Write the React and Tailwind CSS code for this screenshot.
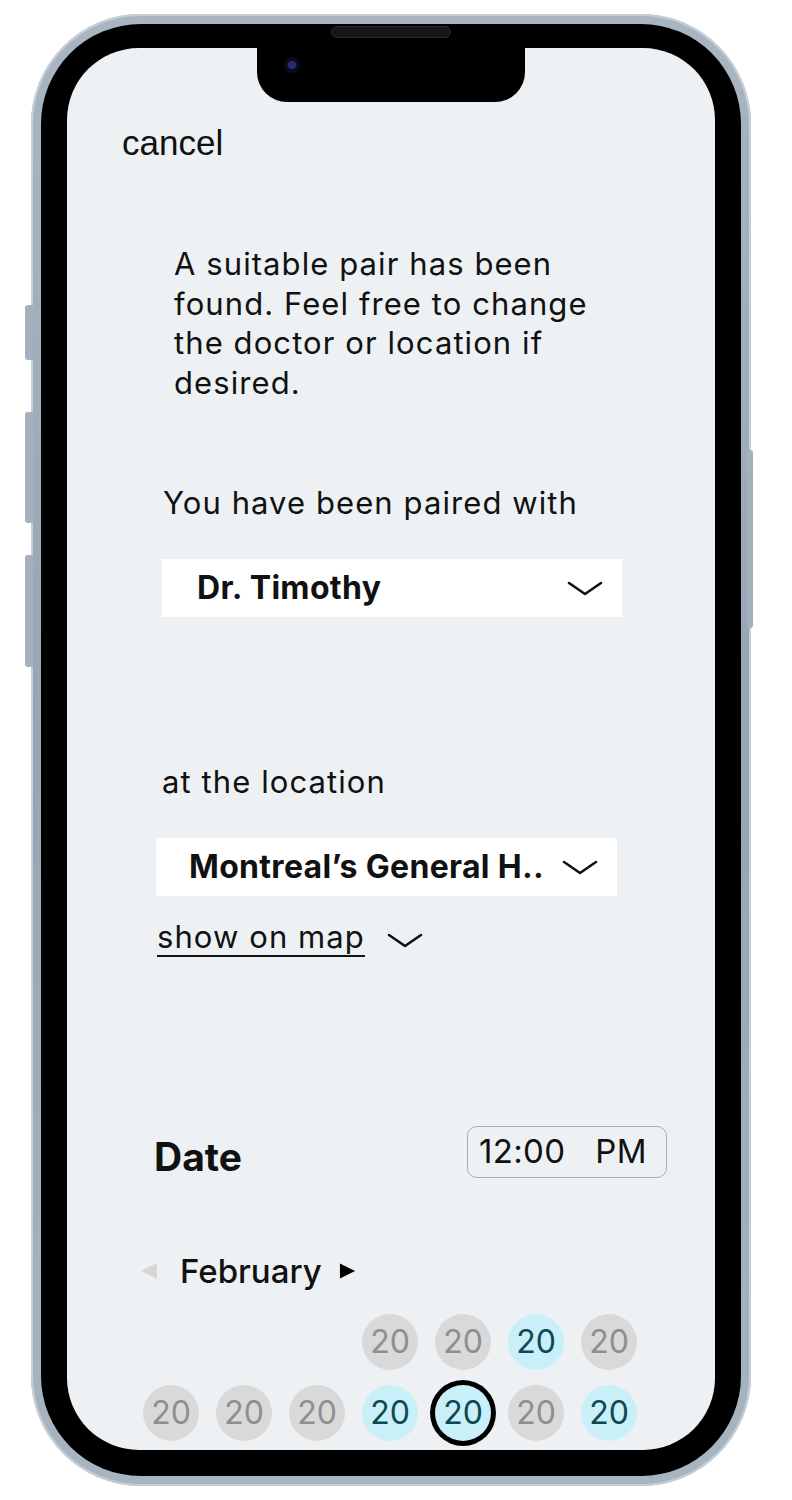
const font = { fontFamily: 'Inter, "Noto Sans", sans-serif' };

const days = [
  null, null, null,
  'off', 'off', 'open', 'off',
  'off', 'off', 'off', 'open', 'selected', 'off', 'open',
];

function Chevron({ className }) {
  return (
    <svg viewBox="0 0 36 15" className={className} fill="none" stroke="#111" strokeWidth="2.6" strokeLinecap="round" strokeLinejoin="round">
      <path d="M2 2 L18 13 L34 2" />
    </svg>
  );
}

function Select({ label, className }) {
  return (
    <div className={`flex h-[58px] w-[460px] items-center justify-between bg-white pr-[19px] ${className}`}>
      <span className="text-[32px] font-bold tracking-[0.01em] text-[#111]">{label}</span>
      <Chevron className="h-[15px] w-[36px]" />
    </div>
  );
}

function Day({ kind }) {
  if (!kind) return <div />;
  const base = 'flex h-[56px] w-[56px] items-center justify-center rounded-full text-[32px]';
  if (kind === 'off') return <div className={`${base} bg-[#d9d9d9] text-[#8e8e8e]`}>20</div>;
  if (kind === 'open') return <div className={`${base} bg-[#c9f0f8] text-[#0d4955]`}>20</div>;
  return <div className={`${base} bg-[#c9f0f8] text-[#0d4955] ring-[5px] ring-black`}>20</div>;
}

export default function App() {
  return (
    <div className="min-h-[1500px] bg-white pl-[31px] pt-[14px]" style={font}>
      <div className="relative w-[720px]">
        {/* side buttons */}
        <div className="absolute left-[-6px] top-[291px] h-[55px] w-[8px] rounded-l-[3px] bg-[#a5b0be]" />
        <div className="absolute left-[-6px] top-[398px] h-[111px] w-[8px] rounded-l-[3px] bg-[#a5b0be]" />
        <div className="absolute left-[-6px] top-[541px] h-[112px] w-[8px] rounded-l-[3px] bg-[#a5b0be]" />
        <div className="absolute right-[-2px] top-[436px] h-[178px] w-[6px] rounded-r-[3px] bg-[#a5b0be]" />

        <div className="rounded-[110px] bg-gradient-to-b from-[#aab5c2] via-[#98a4b3] to-[#a9b4c1] p-[10px] shadow-[inset_0_0_0_2px_#c6ced8]">
          <div className="relative rounded-[100px] bg-black px-[26px] pb-[26px] pt-[24px]">
            <div className="absolute left-1/2 top-[2px] h-[12px] w-[120px] -translate-x-1/2 rounded-full border border-[#2a2a2a] bg-[#151515]" />
            <div className="relative h-[1402px] overflow-hidden rounded-[72px] bg-[#edf1f4] text-[#111]">
              {/* notch */}
              <div className="absolute left-1/2 top-0 h-[54px] w-[268px] -translate-x-1/2 rounded-b-[30px] bg-black">
                <div className="absolute left-[27px] top-[9px] h-[16px] w-[16px] rounded-full bg-[#0b0b22] p-[4px]">
                  <div className="h-full w-full rounded-full bg-[#27306b]" />
                </div>
              </div>

              <div className="flex flex-col">
                <div className="ml-[55px] mt-[75px] text-[35px] leading-[40px]" style={{ fontFamily: '"Liberation Sans", Arial, sans-serif' }}>cancel</div>

                <p className="ml-[107px] mt-[81px] w-[450px] text-[31px] leading-[39.5px] tracking-[0.035em]">
                  A suitable pair has been found. Feel free to change the doctor or location if desired.
                </p>

                <div className="ml-[96px] mt-[81px] text-[31px] leading-[40px] tracking-[0.035em]">You have been paired with</div>

                <Select label="Dr. Timothy" className="ml-[95px] mt-[36px] pl-[35px]" />

                <div className="ml-[95px] mt-[145px] text-[31px] leading-[40px] tracking-[0.035em]">at the location</div>

                <Select label="Montreal’s General H.." className="ml-[89px] mt-[36px] w-[461px] pl-[33px]" />

                <div className="ml-[90px] mt-[21px] flex h-[40px] items-center gap-[22px]">
                  <span className="text-[31px] leading-[40px] tracking-[0.035em] underline decoration-[2px] underline-offset-[7px]">show on map</span>
                  <Chevron className="mt-[6px] h-[15px] w-[36px]" />
                </div>

                <div className="ml-[87px] mr-[48px] mt-[169px] flex items-start justify-between">
                  <span className="mt-[9px] text-[39px] font-bold leading-[44px]">Date</span>
                  <div className="flex h-[52px] w-[200px] items-center rounded-[10px] border-[1.5px] border-[#ababab] pl-[11px] text-[33px] tracking-[0.01em]">
                    12:00<span className="ml-[30px]">PM</span>
                  </div>
                </div>

                <div className="ml-[73px] mt-[72px] flex h-[40px] items-center">
                  <svg viewBox="0 0 18 18" className="h-[18px] w-[18px]">
                    <polygon points="17,1 17,17 1,9" fill="#d6d6d6" />
                  </svg>
                  <span className="ml-[22px] text-[33px] font-medium leading-[40px]">February</span>
                  <svg viewBox="0 0 18 18" className="ml-[17px] h-[18px] w-[17px]">
                    <polygon points="1,1 1,17 17,9" fill="#000" />
                  </svg>
                </div>

                <div className="ml-[76px] mt-[23px] grid grid-cols-[repeat(7,56px)] gap-x-[17px] gap-y-[15px]">
                  {days.map((k, i) => (
                    <Day key={i} kind={k} />
                  ))}
                </div>
              </div>
            </div>
          </div>
        </div>
      </div>
    </div>
  );
}
